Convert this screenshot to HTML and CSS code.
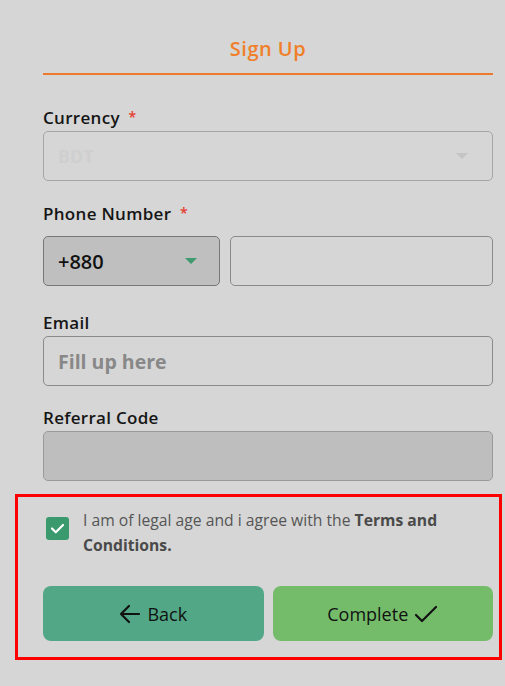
FILE: index.html
```html
<!DOCTYPE html>
<html>
<head>
<meta charset="utf-8">
<link rel="stylesheet" href="styles.css">
</head>
<body>
<div class="page">
  <div class="header"><h1 class="title">Sign Up</h1></div>

  <div class="field field-first">
    <label class="label">Currency <span class="req">*</span></label>
    <div class="input select-disabled">
      <span class="select-value">BDT</span>
      <svg class="caret" width="12" height="7" viewBox="0 0 12 7"><path d="M0 0H12L6 6Z" fill="#c4c4c4"/></svg>
    </div>
  </div>

  <div class="field">
    <label class="label">Phone Number <span class="req">*</span></label>
    <div class="phone-row">
      <div class="input code">
        <span class="code-value">+880</span>
        <svg class="caret" width="12" height="7" viewBox="0 0 12 7"><path d="M0 0H12L6 6Z" fill="#3f9a70"/></svg>
      </div>
      <div class="input phone"></div>
    </div>
  </div>

  <div class="field field-email">
    <label class="label">Email</label>
    <div class="input"><span class="placeholder">Fill up here</span></div>
  </div>

  <div class="field field-ref">
    <label class="label">Referral Code</label>
    <div class="input filled"></div>
  </div>

  <div class="highlight">
    <div class="agree">
      <span class="checkbox">
        <svg width="23" height="23" viewBox="0 0 23 23"><path d="M6 11.5L9.8 15.3L17 8" fill="none" stroke="#fff" stroke-width="2.2" stroke-linecap="round" stroke-linejoin="round"/></svg>
      </span>
      <p class="agree-text">I am of legal age and i agree with the <b>Terms and</b> <b>Conditions.</b></p>
    </div>
    <div class="buttons">
      <button class="btn btn-back">
        <svg width="22" height="20" viewBox="0 0 22 20"><path d="M20 10H2M10 2L2 10L10 18" fill="none" stroke="#111" stroke-width="2.2" stroke-linecap="round" stroke-linejoin="round"/></svg>
        <span>Back</span>
      </button>
      <button class="btn btn-complete">
        <span>Complete</span>
        <svg width="24" height="20" viewBox="0 0 24 20"><path d="M2 11L8 17L22 3" fill="none" stroke="#111" stroke-width="2.2" stroke-linecap="round" stroke-linejoin="round"/></svg>
      </button>
    </div>
  </div>
</div>
</body>
</html>
```

FILE: styles.css
```css
html, body {
  margin: 0;
  padding: 0;
  background: #d6d6d6;
}
body {
  font-family: "Open Sans", "DejaVu Sans", sans-serif;
  color: #111;
}
.page {
  width: 450px;
  margin-left: 43px;
  padding-bottom: 30px;
}
.header {
  height: 75px;
  box-sizing: border-box;
  border-bottom: 2px solid #ec7b2b;
  display: flex;
  align-items: center;
  justify-content: center;
}
.title {
  margin: 0;
  padding-top: 24px;
  font-size: 20px;
  font-weight: 600;
  letter-spacing: 0.5px;
  color: #f07f2a;
  line-height: 1;
}
.field {
  margin-top: 21px;
}
.field-first {
  margin-top: 31px;
}
.field-email {
  margin-top: 26px;
}
.field-ref {
  margin-top: 21px;
}
.label {
  display: block;
  font-size: 17px;
  font-weight: 600;
  letter-spacing: 0.3px;
  line-height: 22px;
  color: #151515;
  margin-bottom: 2px;
}
.req {
  color: #e63b2e;
  font-size: 14px;
  margin-left: 4px;
  vertical-align: 2px;
}
.input {
  box-sizing: border-box;
  height: 50px;
  border: 1px solid #8a8a8a;
  border-radius: 5px;
  display: flex;
  align-items: center;
  padding: 0 14px;
}
.select-disabled {
  border-color: #a6a6a6;
  justify-content: space-between;
  padding-right: 24px;
}
.select-value {
  font-size: 18px;
  font-weight: 700;
  color: #cfcfcf;
}
.phone-row {
  display: flex;
  gap: 10px;
  margin-top: 11px;
}
.code {
  width: 177px;
  background: #bfbfbf;
  border-color: #777;
  justify-content: space-between;
  padding-right: 22px;
}
.code-value {
  font-size: 20px;
  font-weight: 600;
  color: #111;
}
.phone {
  flex: 1;
}
.placeholder {
  font-size: 19.5px;
  font-weight: 700;
  color: #888;
}
.filled {
  background: #bebebe;
  border-color: #9a9a9a;
}
.highlight {
  margin: 13px -9px 0 -28px;
  border: 3px solid #ff0000;
  padding: 11px 6px 16px 25px;
}
.agree {
  display: flex;
  align-items: flex-start;
  gap: 14px;
  padding-left: 3px;
}
.checkbox {
  flex: none;
  width: 23px;
  height: 23px;
  margin-top: 9px;
  border-radius: 3px;
  background: #3a9a6e;
  display: block;
}
.checkbox svg { display: block; }
.agree-text {
  margin: 0;
  font-size: 15.7px;
  line-height: 25px;
  color: #555;
}
.agree-text b {
  font-weight: 700;
  color: #4a4a4a;
}
.buttons {
  display: flex;
  gap: 9px;
  margin-top: 28px;
}
.btn {
  flex: 1;
  height: 55px;
  border: none;
  border-radius: 8px;
  display: flex;
  align-items: center;
  justify-content: center;
  gap: 6px;
  font-family: "Open Sans", sans-serif;
  font-size: 18px;
  font-weight: 500;
  color: #111;
}
.btn svg { display: block; }
.btn-back { background: #52a886; }
.btn-complete { background: #74bc6a; }
```
